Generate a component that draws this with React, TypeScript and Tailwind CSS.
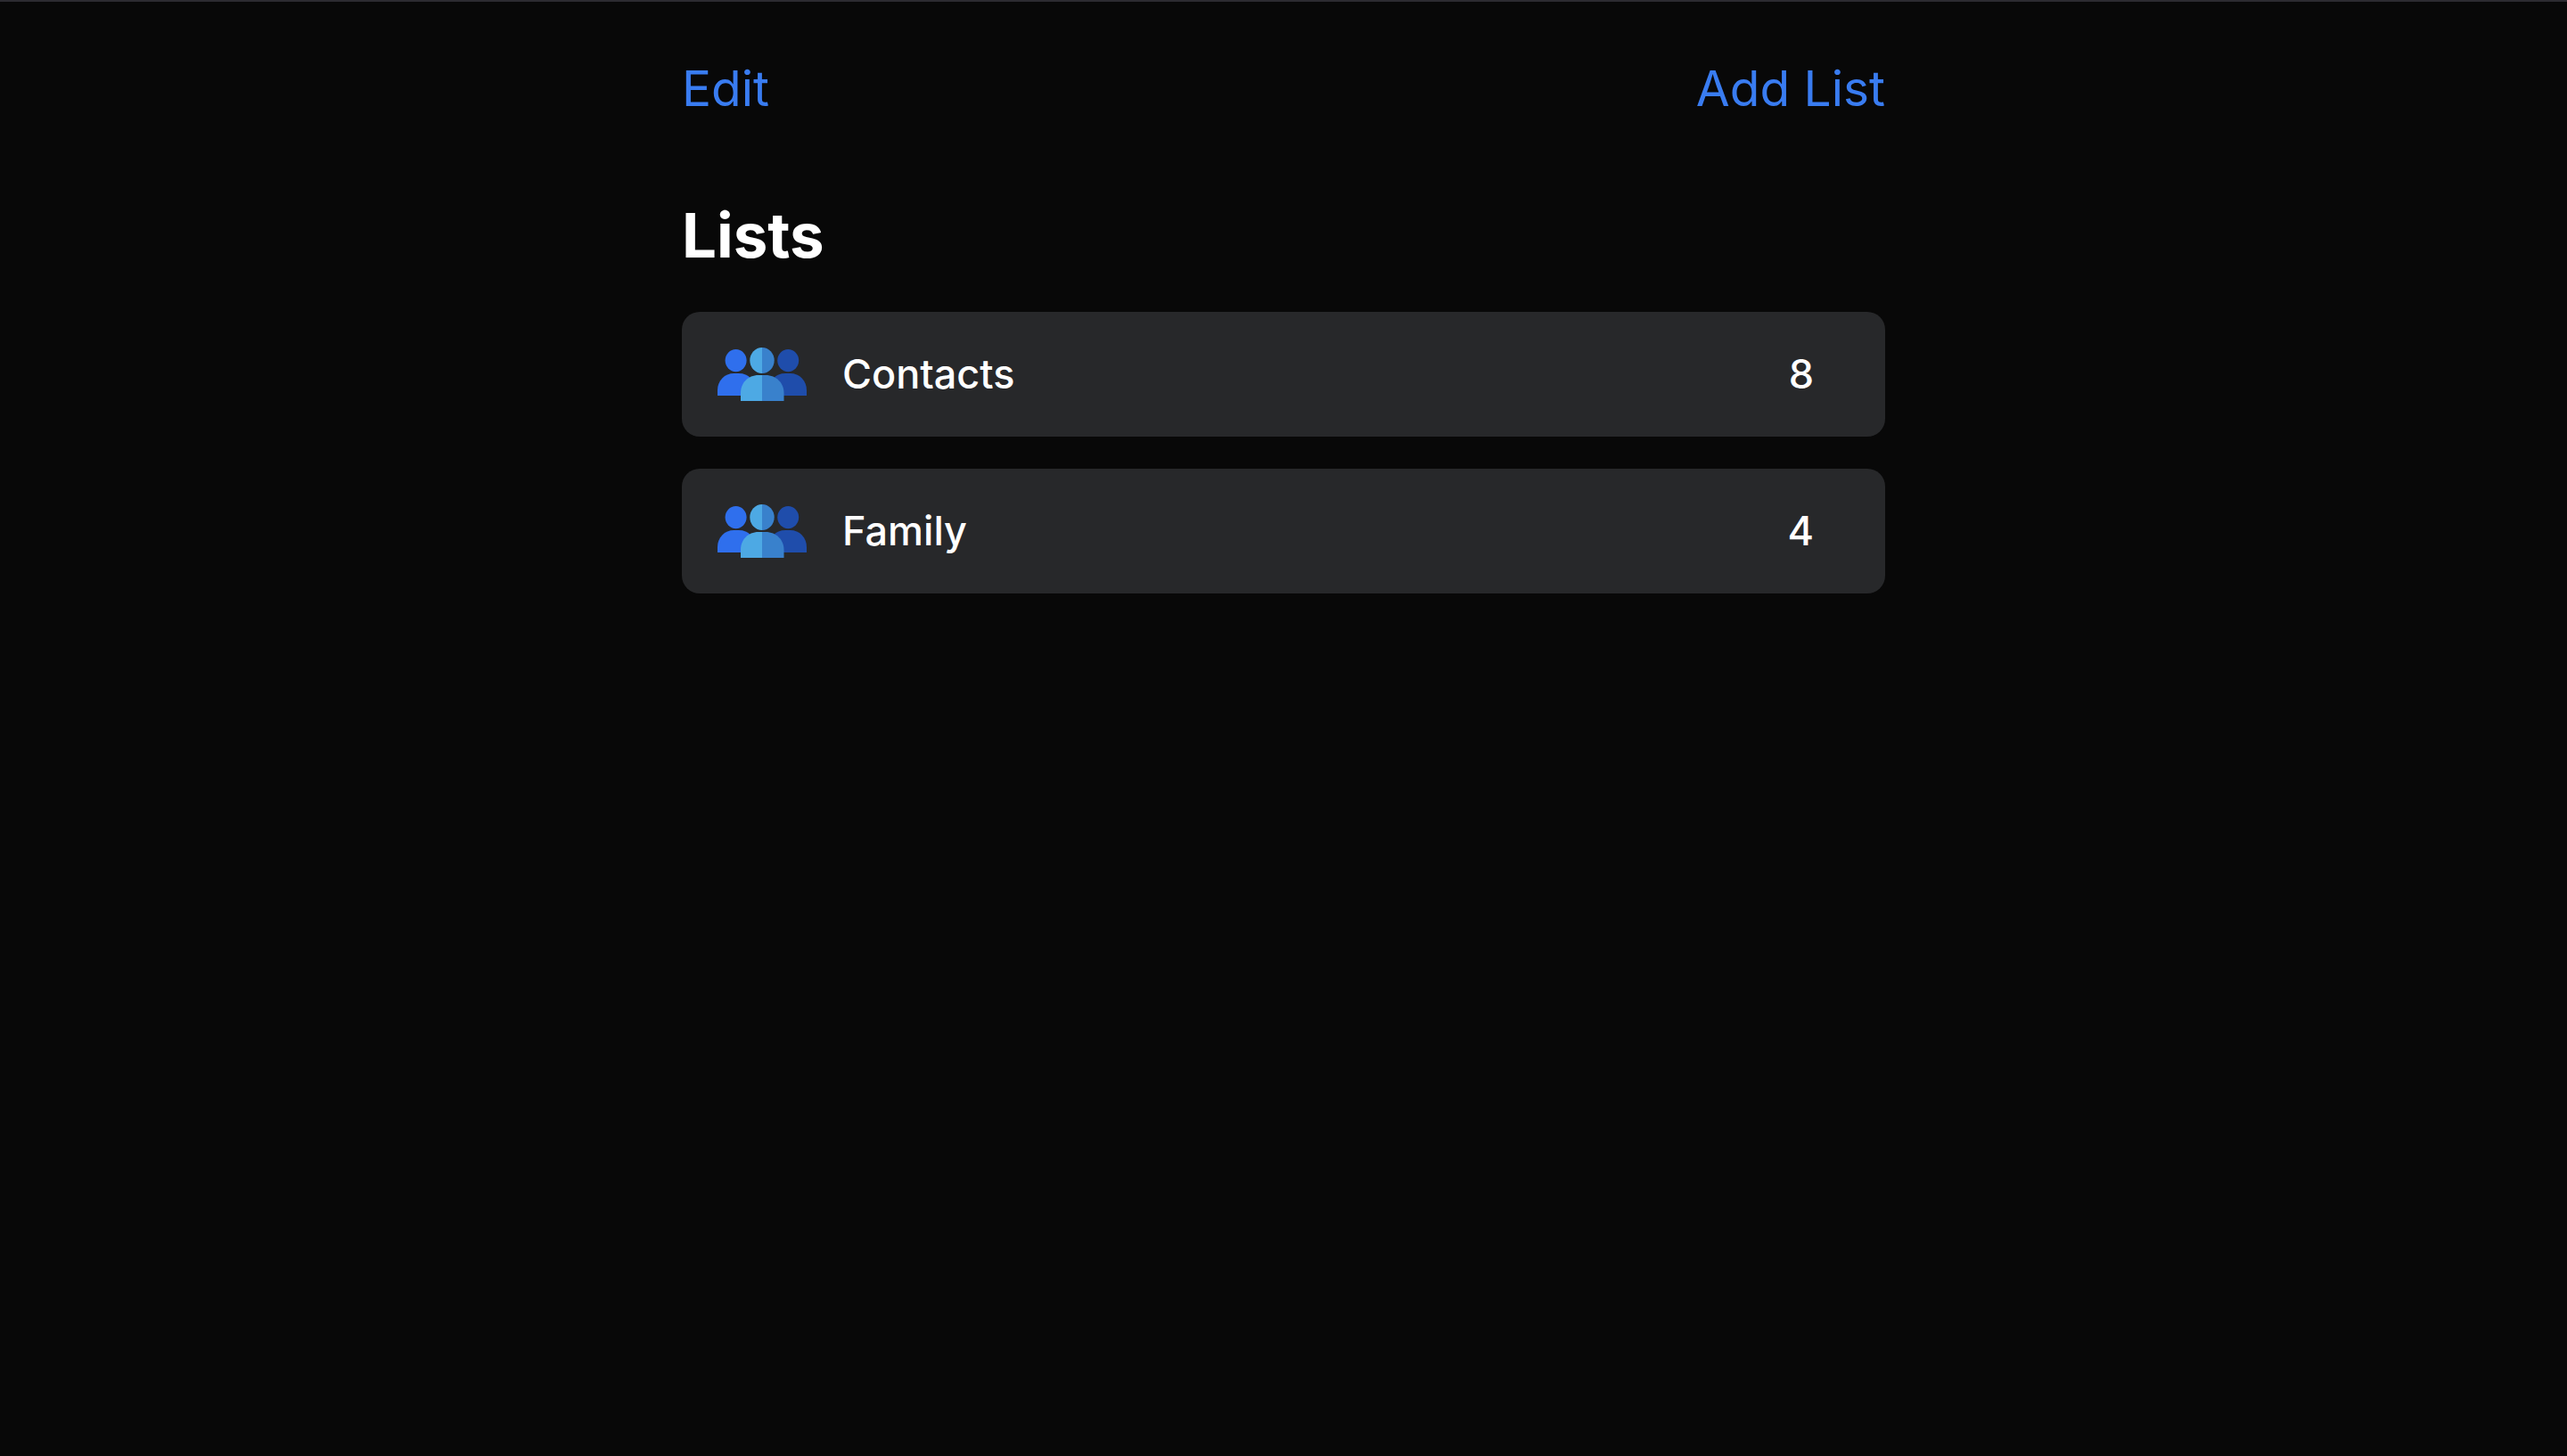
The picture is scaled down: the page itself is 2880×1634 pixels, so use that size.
type ContactList = { name: string; count: number };

const lists: ContactList[] = [
  { name: "Contacts", count: 8 },
  { name: "Family", count: 4 },
];

function PeopleIcon() {
  return (
    <svg viewBox="0 0 100 60" className="h-[60px] w-[100px] shrink-0" aria-hidden="true">
      <ellipse cx="20.6" cy="14.6" rx="12" ry="12.6" fill="#2f6fed" />
      <path d="M0 54V48C0 37 8 29 18.5 29H24C35 29 42 37 42 48V54Z" fill="#2f6fed" />
      <ellipse cx="79.2" cy="14.6" rx="12" ry="12.6" fill="#1f4dab" />
      <path d="M58 54V48C58 37 65 29 76 29H81.5C92 29 100 37 100 48V54Z" fill="#1f4dab" />
      <path d="M50 0A13.7 14.5 0 0 0 50 29Z" fill="#4da9e4" />
      <path d="M50 0A13.7 14.5 0 0 1 50 29Z" fill="#3981cc" />
      <path d="M50 31H46C34 31 26 40 26 51V60H50Z" fill="#4da9e4" />
      <path d="M50 31H54C66 31 74.5 40 74.5 51V60H50Z" fill="#3981cc" />
    </svg>
  );
}

function ListRow({ name, count }: ContactList) {
  return (
    <li>
      <button
        type="button"
        className="flex h-[140px] w-full items-center rounded-[20px] bg-[#27282a] pr-20 pl-10 text-left text-[45px] leading-[60px] font-medium text-white"
      >
        <PeopleIcon />
        <span className="ml-10 flex-1">{name}</span>
        <span>{count}</span>
      </button>
    </li>
  );
}

export default function App() {
  return (
    <div className="min-h-screen border-t-2 border-[#2c2b31] bg-[#080808] px-8 pt-16 font-['Inter',sans-serif]">
      <main className="mx-auto max-w-[1350px]">
        <header className="flex items-center justify-between text-[55px] leading-[66px] text-[#397cf1]">
          <button type="button">Edit</button>
          <button type="button">Add List</button>
        </header>
        <h1 className="mt-[92px] text-[69px] leading-[80px] font-bold text-white">Lists</h1>
        <ul className="mt-[46px] flex flex-col gap-9">
          {lists.map((list) => (
            <ListRow key={list.name} {...list} />
          ))}
        </ul>
      </main>
    </div>
  );
}
